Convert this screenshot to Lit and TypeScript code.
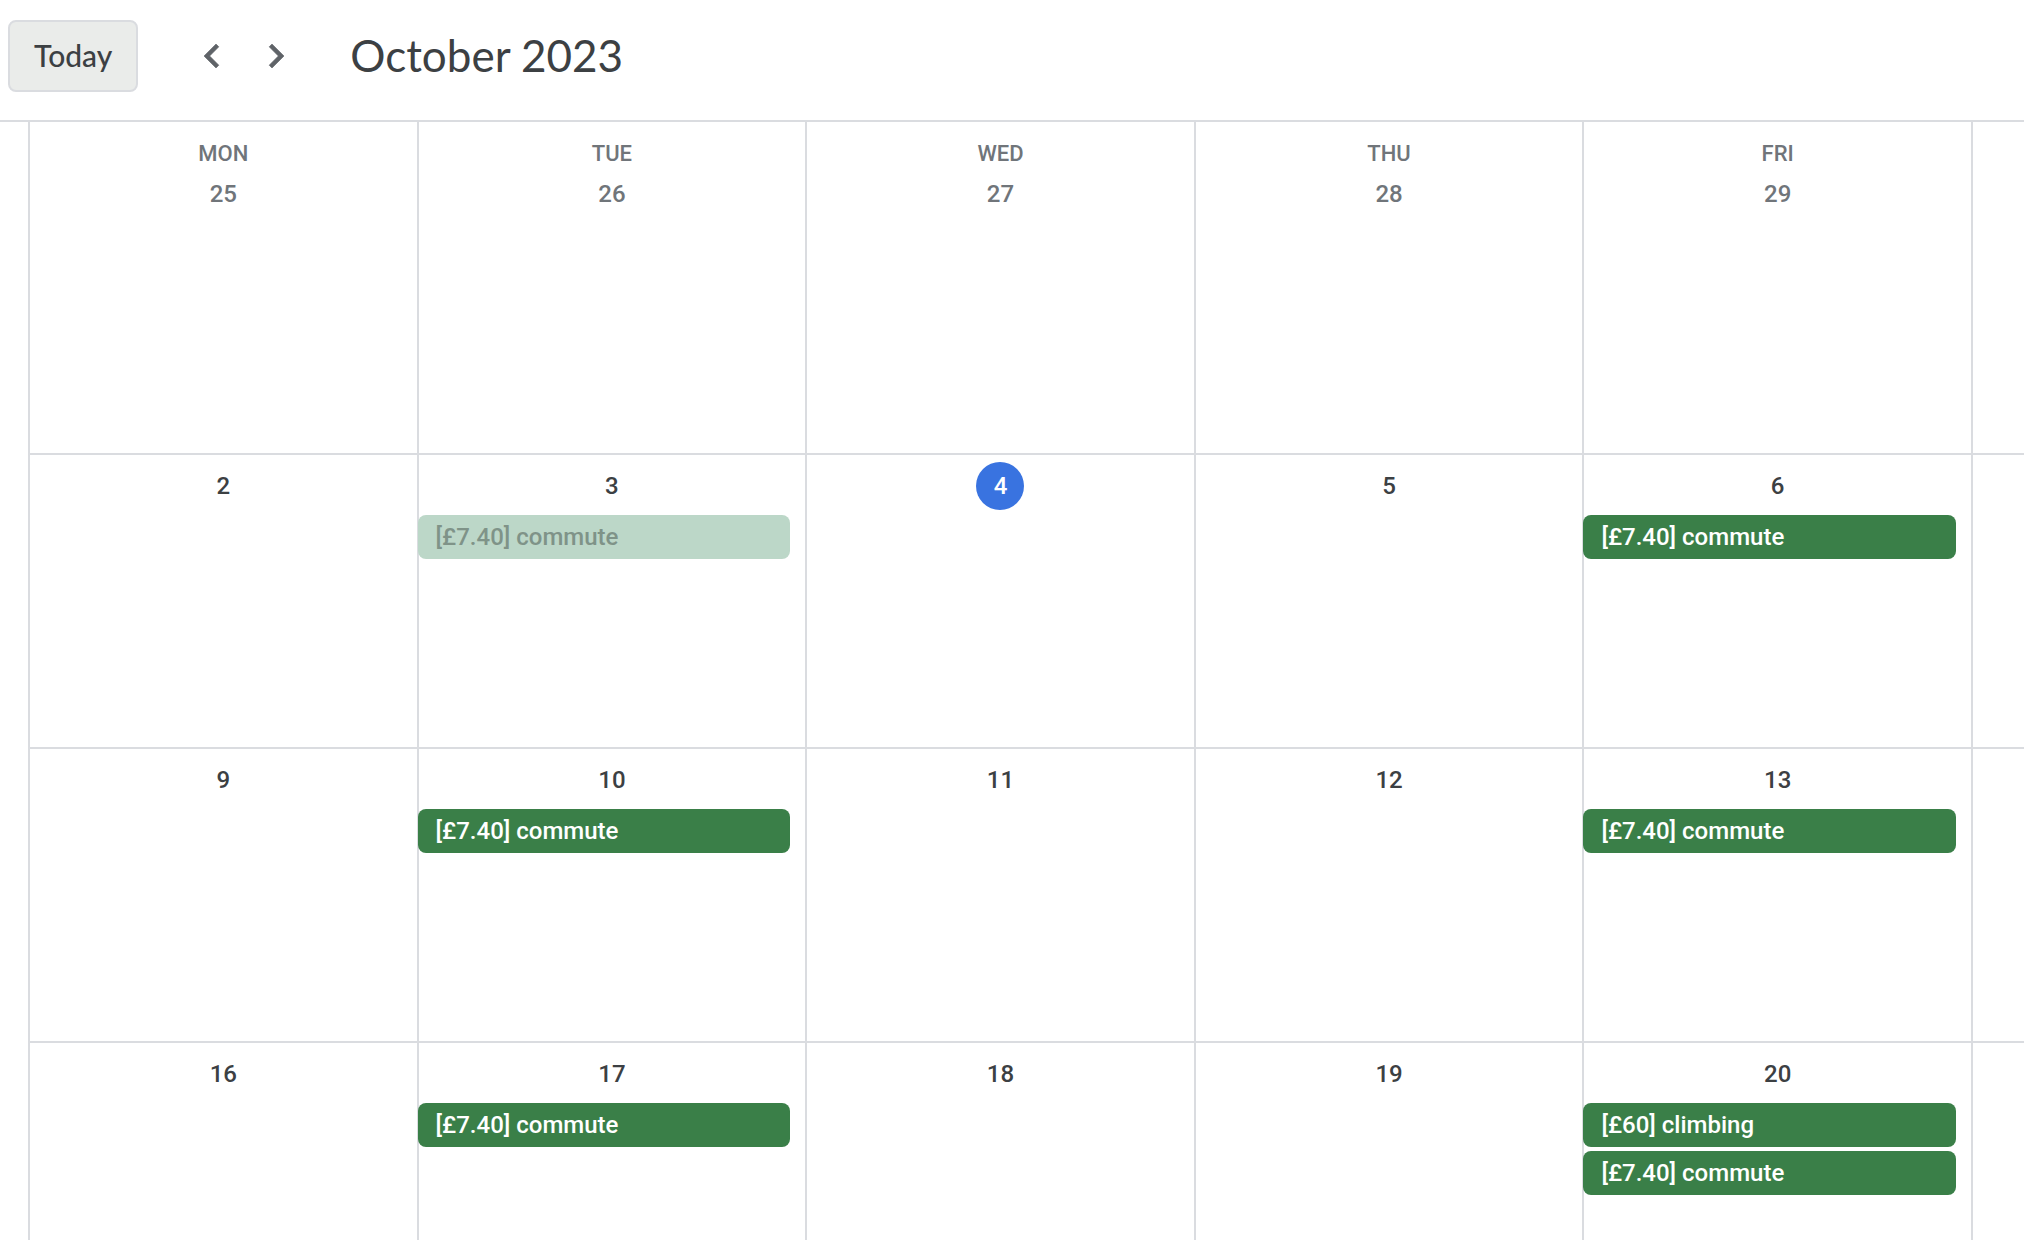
import { LitElement, html, css, nothing } from "lit";
import { customElement } from "lit/decorators.js";
import { classMap } from "lit/directives/class-map.js";

interface CalendarEvent {
  title: string;
  past?: boolean;
}

interface Day {
  date: number;
  outside?: boolean;
  today?: boolean;
  events?: CalendarEvent[];
}

const WEEKDAYS = ["Mon", "Tue", "Wed", "Thu", "Fri"];
const commute: CalendarEvent = { title: "[£7.40] commute" };

const WEEKS: Day[][] = [
  [25, 26, 27, 28, 29].map((date) => ({ date, outside: true })),
  [
    { date: 2 },
    { date: 3, events: [{ ...commute, past: true }] },
    { date: 4, today: true },
    { date: 5 },
    { date: 6, events: [commute] },
  ],
  [
    { date: 9 },
    { date: 10, events: [commute] },
    { date: 11 },
    { date: 12 },
    { date: 13, events: [commute] },
  ],
  [
    { date: 16 },
    { date: 17, events: [commute] },
    { date: 18 },
    { date: 19 },
    { date: 20, events: [{ title: "[£60] climbing" }, commute] },
  ],
];

@customElement("app-root")
export class AppRoot extends LitElement {
  static styles = css`
    :host {
      display: flex;
      flex-direction: column;
      height: 100vh;
      overflow: hidden;
      background: #fff;
      color: #3c4043;
      font-family: Roboto, "Liberation Sans", sans-serif;
    }
    * {
      box-sizing: border-box;
    }
    button {
      margin: 0;
      cursor: pointer;
    }
    .toolbar {
      display: flex;
      align-items: center;
      flex: none;
      padding: 20px 8px 28px;
      border-bottom: 2px solid #dadce0;
    }
    .today-button {
      height: 72px;
      padding: 0 24px 2px;
      border: 2px solid #dadce0;
      border-radius: 8px;
      background: #eaecea;
      color: #3c4043;
      font: 500 30px/36px Lato, "Liberation Sans", sans-serif;
    }
    .pager {
      display: flex;
      gap: 16px;
      margin: 0 50px;
    }
    .page-button {
      width: 48px;
      height: 48px;
      padding: 0;
      border: 0;
      background: none;
      color: #5f6368;
    }
    .icon {
      display: block;
      width: 48px;
      height: 48px;
      fill: currentColor;
      stroke: currentColor;
      stroke-width: 0.3;
      stroke-linejoin: round;
    }
    .title {
      margin: 0;
      padding-bottom: 2px;
      font: 400 44px/56px Lato, "Liberation Sans", sans-serif;
    }
    .calendar {
      flex: 1;
      min-height: 0;
      padding-left: 28px;
      overflow: hidden;
    }
    .month {
      width: 100%;
      table-layout: fixed;
      border-collapse: separate;
      border-spacing: 0;
    }
    .edge {
      width: 53px;
    }
    .weekday,
    .day {
      padding: 0;
      border-left: 2px solid #dadce0;
    }
    .weekday {
      height: 41px;
      padding-top: 23px;
      color: #70757a;
      font-size: 22px;
      font-weight: 500;
      line-height: 18px;
      text-transform: uppercase;
    }
    .day {
      height: 294px;
      padding-top: 7px;
      border-top: 2px solid #dadce0;
      vertical-align: top;
    }
    .first .day {
      height: 290px;
      border-top: 0;
    }
    .date {
      display: block;
      width: 48px;
      margin: 0 auto;
      border-radius: 50%;
      font-size: 24px;
      font-weight: 500;
      line-height: 48px;
      text-align: center;
    }
    .date.outside {
      color: #70757a;
    }
    .date.today {
      background: #3973e0;
      color: #fff;
    }
    .events {
      display: flex;
      flex-direction: column;
      gap: 4px;
      margin: 5px 15px 0 -1px;
      padding: 0;
      list-style: none;
    }
    .event {
      display: block;
      width: 100%;
      height: 44px;
      padding: 0 18px;
      border: 0;
      border-radius: 8px;
      background: #3a7f48;
      color: #fff;
      font: 500 24px/44px Roboto, "Liberation Sans", sans-serif;
      text-align: left;
      white-space: nowrap;
      overflow: hidden;
      text-overflow: ellipsis;
    }
    .event.past {
      background: #bcd7c8;
      color: #7f9388;
    }
  `;

  private renderDay(day: Day) {
    const dateClasses = { date: true, outside: !!day.outside, today: !!day.today };
    return html`<td class="day">
      <span class=${classMap(dateClasses)} aria-current=${day.today ? "date" : nothing}>${day.date}</span>
      ${day.events
        ? html`<ul class="events">
            ${day.events.map(
              (event) => html`<li>
                <button type="button" class=${classMap({ event: true, past: !!event.past })}>${event.title}</button>
              </li>`,
            )}
          </ul>`
        : nothing}
    </td>`;
  }

  render() {
    return html`
      <header class="toolbar">
        <button type="button" class="today-button">Today</button>
        <nav class="pager">
          <button type="button" class="page-button" aria-label="Previous month">
            <svg class="icon" viewBox="0 0 24 24" aria-hidden="true">
              <path d="M15.41 7.41L14 6l-6 6 6 6 1.41-1.41L10.83 12z" />
            </svg>
          </button>
          <button type="button" class="page-button" aria-label="Next month">
            <svg class="icon" viewBox="0 0 24 24" aria-hidden="true">
              <path d="M10 6L8.59 7.41 13.17 12l-4.58 4.59L10 18l6-6z" />
            </svg>
          </button>
        </nav>
        <h1 class="title">October 2023</h1>
      </header>
      <main class="calendar">
        <table class="month">
          <colgroup>
            ${WEEKDAYS.map(() => html`<col />`)}
            <col class="edge" />
          </colgroup>
          <thead>
            <tr>
              ${WEEKDAYS.map((name) => html`<th class="weekday" scope="col">${name}</th>`)}
              <td class="weekday"></td>
            </tr>
          </thead>
          <tbody>
            ${WEEKS.map(
              (week, i) => html`<tr class=${classMap({ first: i === 0 })}>
                ${week.map((day) => this.renderDay(day))}
                <td class="day"></td>
              </tr>`,
            )}
          </tbody>
        </table>
      </main>
    `;
  }
}
